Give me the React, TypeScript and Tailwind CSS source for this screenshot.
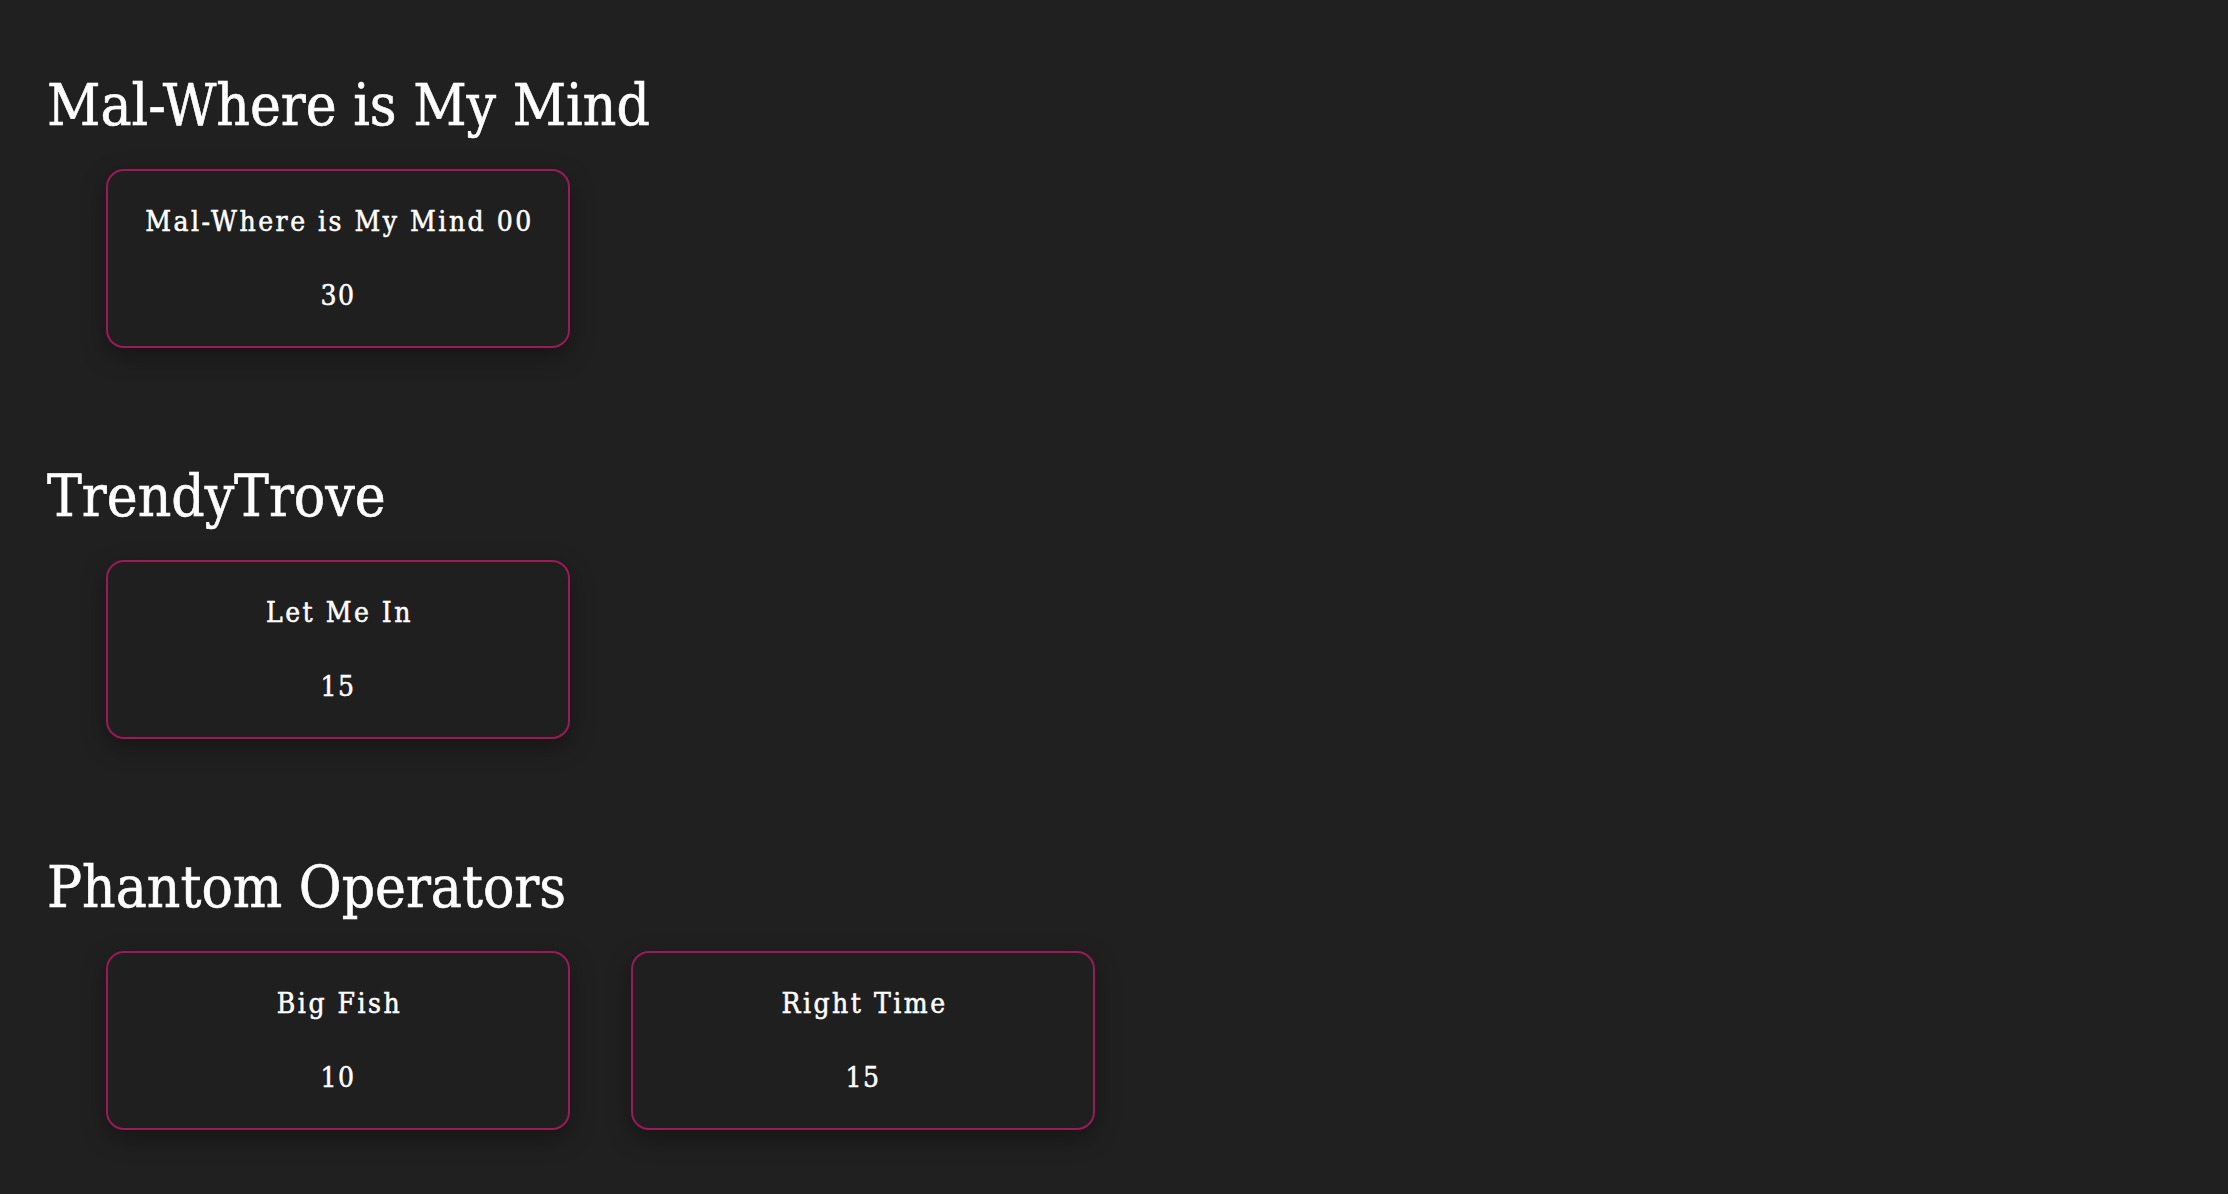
import React from "react";

const sections = [
  { title: "Mal-Where is My Mind", items: [{ name: "Mal-Where is My Mind 00", value: "30" }] },
  { title: "TrendyTrove", items: [{ name: "Let Me In", value: "15" }] },
  {
    title: "Phantom Operators",
    items: [
      { name: "Big Fish", value: "10" },
      { name: "Right Time", value: "15" },
    ],
  },
];

function Card({ name, value }: { name: string; value: string }) {
  return (
    <div className="flex h-[179px] w-[464px] flex-col items-center justify-center gap-[46px] rounded-[18px] border-2 border-[#9a1b55] bg-[#1f1f1f] shadow-[0_8px_24px_rgba(0,0,0,0.35)]">
      <div className="pl-[3px] text-[28px] leading-none tracking-[2.5px] text-white [-webkit-text-stroke:0.5px_white]">
        {name}
      </div>
      <div className="text-[28px] leading-none tracking-[1.5px] text-white [-webkit-text-stroke:0.5px_white]">
        {value}
      </div>
    </div>
  );
}

export default function App() {
  return (
    <div
      className="flex min-h-[1194px] flex-col gap-[119px] bg-[#202020] px-[47px] pt-[76px] text-white"
      style={{ fontFamily: '"DejaVu Serif Condensed", "DejaVu Serif", serif', fontStretch: "condensed" }}
    >
      {sections.map((s) => (
        <section key={s.title}>
          <h2 className="text-[58px] leading-none [-webkit-text-stroke:0.6px_white]">{s.title}</h2>
          <div className="mt-[35px] flex gap-[61px] pl-[59px]">
            {s.items.map((it) => (
              <Card key={it.name} {...it} />
            ))}
          </div>
        </section>
      ))}
    </div>
  );
}
